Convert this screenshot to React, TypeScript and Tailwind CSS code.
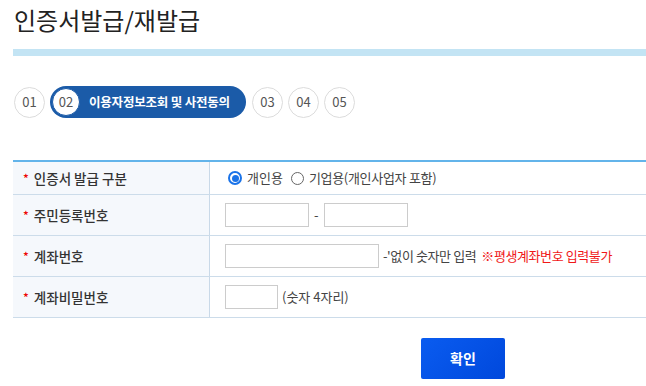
const font = "font-['Noto_Sans_CJK_KR','Noto_Sans',sans-serif]";

const Step = ({ n }: { n: string }) => (
  <div className="w-[31px] h-[31px] rounded-full border border-[#dcdcdc] flex items-center justify-center text-[13px] text-[#555]">
    {n}
  </div>
);

const Label = ({ text }: { text: string }) => (
  <div className="w-[197px] shrink-0 bg-[#f5f8fc] border-r border-[#c9d9e8] flex items-center pl-[10px] text-[13.5px] font-medium text-[#333]">
    <span className="text-[#e00] mr-[5px] text-[12px]">*</span>
    {text}
  </div>
);

export default function App() {
  return (
    <div className={`${font} w-[646px] h-[386px] bg-white pl-[13px] pt-[4px] overflow-hidden`}>
      <h1 className="text-[24px] leading-[32px] font-normal text-[#222] pl-[1px]">인증서발급/재발급</h1>
      <div className="mt-[13px] h-[7px] bg-[#c3e4f4]" />

      <div className="mt-[30px] flex items-center gap-[5px] pl-[1px]">
        <Step n="01" />
        <div className="h-[32px] w-[196px] rounded-full bg-[#1b5ba8] flex items-center pl-[2px]">
          <div className="w-[28px] h-[28px] rounded-full bg-white border border-[#1b5ba8] flex items-center justify-center text-[13px] text-[#555]">
            02
          </div>
          <span className="ml-[9px] text-[12.5px] font-bold text-white tracking-[-0.2px]">이용자정보조회 및 사전동의</span>
        </div>
        <div className="ml-[1px]">
          <Step n="03" />
        </div>
        <Step n="04" />
        <Step n="05" />
      </div>

      <div className="mt-[42px] border-t-2 border-[#63b4ea]">
        <div className="flex h-[33px] border-b border-[#ccdcea]">
          <Label text="인증서 발급 구분" />
          <div className="flex items-center pl-[18px] text-[13px] text-[#444]">
            <span className="w-[14px] h-[14px] rounded-full border-2 border-[#1a73e8] flex items-center justify-center">
              <span className="w-[7px] h-[7px] rounded-full bg-[#1a73e8]" />
            </span>
            <span className="ml-[5px]">개인용</span>
            <span className="ml-[8px] w-[13px] h-[13px] rounded-full border border-[#666]" />
            <span className="ml-[5px] tracking-[-0.3px]">기업용(개인사업자 포함)</span>
          </div>
        </div>
        <div className="flex h-[41px] border-b border-[#ccdcea]">
          <Label text="주민등록번호" />
          <div className="flex items-center pl-[15px] text-[13px] text-[#444]">
            <div className="w-[84px] h-[24px] border border-[#ccc]" />
            <span className="mx-[5px]">-</span>
            <div className="w-[84px] h-[24px] border border-[#ccc]" />
          </div>
        </div>
        <div className="flex h-[41px] border-b border-[#ccdcea]">
          <Label text="계좌번호" />
          <div className="flex items-center pl-[15px] text-[13px] text-[#444] tracking-[-0.4px]">
            <div className="w-[154px] h-[24px] border border-[#ccc]" />
            <span className="ml-[4px]">-'없이 숫자만 입력</span>
            <span className="ml-[5px] text-[#f01818]">※평생계좌번호 입력불가</span>
          </div>
        </div>
        <div className="flex h-[41px] border-b border-[#ccdcea]">
          <Label text="계좌비밀번호" />
          <div className="flex items-center pl-[15px] text-[13px] text-[#444]">
            <div className="w-[53px] h-[24px] border border-[#ccc]" />
            <span className="ml-[4px]">(숫자 4자리)</span>
          </div>
        </div>
      </div>

      <div className="mt-[20px] pl-[408px]">
        <button className="w-[84px] h-[41px] rounded-[2px] bg-[linear-gradient(135deg,#0a5cf0,#0048dc)] text-white text-[14px] font-bold">
          확인
        </button>
      </div>
    </div>
  );
}
